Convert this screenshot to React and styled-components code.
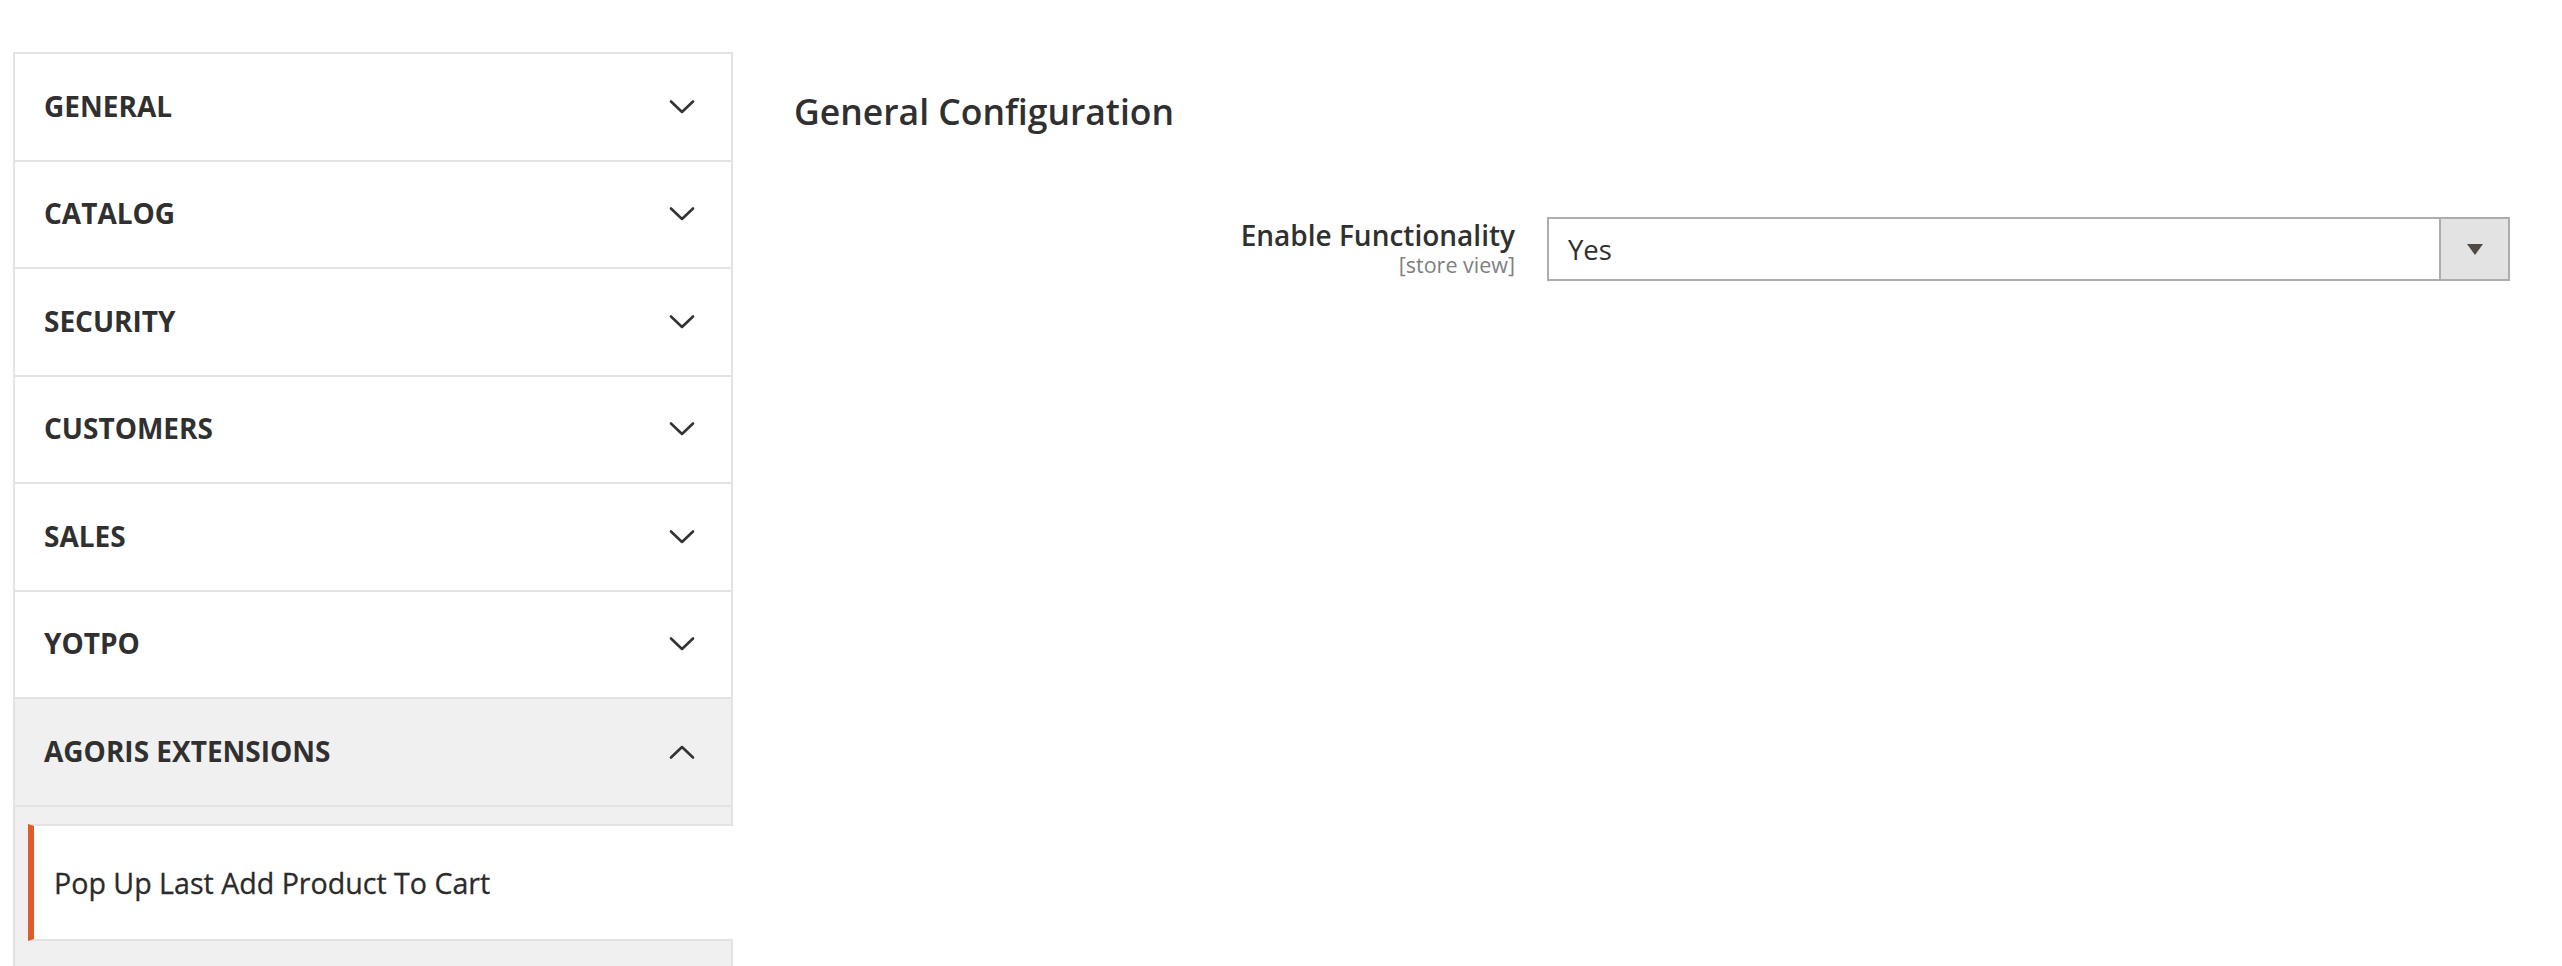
import React from "react";
import styled, { createGlobalStyle } from "styled-components";

const Global = createGlobalStyle`
  html, body {
    margin: 0;
    padding: 0;
    background: #fff;
  }
  body {
    font-family: "Open Sans", "Noto Sans", sans-serif;
    color: #303030;
  }
`;

const Page = styled.div`
  display: flex;
  align-items: flex-start;
  padding: 52px 52px 0 13px;
  height: 966px;
  box-sizing: border-box;
  overflow: hidden;
`;

const Sidebar = styled.nav`
  width: 720px;
  flex: none;
  box-sizing: border-box;
  border: 2px solid #e3e3e3;
  border-bottom: none;
  background: #f0f0f0;
  min-height: 960px;
`;

const Section = styled.div`
  display: flex;
  align-items: center;
  justify-content: space-between;
  height: 105.5px;
  padding: 0 36px 0 29px;
  background: ${(p) => (p.$open ? "#f0f0f0" : "#fff")};
  border-bottom: 2px solid #e3e3e3;
`;

const SectionTitle = styled.span`
  font-size: 28px;
  font-weight: 700;
  text-transform: uppercase;
  margin-top: -2px;
`;

const Chevron = styled.svg`
  width: 26px;
  height: 16px;
  transform: ${(p) => (p.$open ? "rotate(180deg)" : "none")};
`;

const Items = styled.div`
  padding-top: 17px;
`;

const Item = styled.a`
  display: flex;
  align-items: center;
  height: 113px;
  margin: 0 -2px 0 13px;
  padding-left: 20px;
  background: #fff;
  border-top: 2px solid #e3e3e3;
  border-bottom: 2px solid #e3e3e3;
  border-left: 6px solid #df5b2a;
  font-size: 28.6px;
  color: #2b2b2b;
  text-decoration: none;
  -webkit-text-stroke: 0.3px #2b2b2b;
`;

const Main = styled.main`
  flex: 1;
  padding-left: 61px;
  padding-top: 38px;
`;

const Heading = styled.h2`
  margin: 0;
  font-size: 35.5px;
  font-weight: 600;
  line-height: 42px;
  color: #303030;
`;

const FieldRow = styled.div`
  display: grid;
  grid-template-columns: 721px 963px;
  column-gap: 32px;
  margin-top: 85px;
`;

const LabelCol = styled.div`
  text-align: right;
`;

const Label = styled.label`
  display: block;
  font-size: 28px;
  font-weight: 600;
  line-height: 36px;
  color: #303030;
`;

const Scope = styled.div`
  font-size: 21.5px;
  line-height: 24px;
  color: #808080;
`;

const Select = styled.div`
  display: flex;
  height: 64px;
  box-sizing: border-box;
  border: 2px solid #adadad;
  background: #fff;
`;

const SelectValue = styled.span`
  flex: 1;
  display: flex;
  align-items: center;
  padding-left: 19px;
  font-size: 27.5px;
  color: #303030;
`;

const SelectButton = styled.span`
  width: 67px;
  display: flex;
  align-items: center;
  justify-content: center;
  background: #e3e3e3;
  border-left: 2px solid #adadad;
`;

const sections = ["General", "Catalog", "Security", "Customers", "Sales", "Yotpo"];

function ChevronIcon({ open }) {
  return (
    <Chevron $open={open} viewBox="0 0 26 16" fill="none">
      <path d="M2 2.5 L13 13 L24 2.5" stroke="#333" strokeWidth="2.6" strokeLinecap="round" strokeLinejoin="round" />
    </Chevron>
  );
}

export default function App() {
  return (
    <>
      <Global />
      <Page>
        <Sidebar>
          {sections.map((s) => (
            <Section key={s}>
              <SectionTitle>{s}</SectionTitle>
              <ChevronIcon />
            </Section>
          ))}
          <Section $open>
            <SectionTitle>Agoris Extensions</SectionTitle>
            <ChevronIcon open />
          </Section>
          <Items>
            <Item href="#">Pop Up Last Add Product To Cart</Item>
          </Items>
        </Sidebar>
        <Main>
          <Heading>General Configuration</Heading>
          <FieldRow>
            <LabelCol>
              <Label>Enable Functionality</Label>
              <Scope>[store view]</Scope>
            </LabelCol>
            <Select>
              <SelectValue>Yes</SelectValue>
              <SelectButton>
                <svg width="16" height="11" viewBox="0 0 16 11">
                  <path d="M0 0 H16 L8 11 Z" fill="#514943" />
                </svg>
              </SelectButton>
            </Select>
          </FieldRow>
        </Main>
      </Page>
    </>
  );
}
